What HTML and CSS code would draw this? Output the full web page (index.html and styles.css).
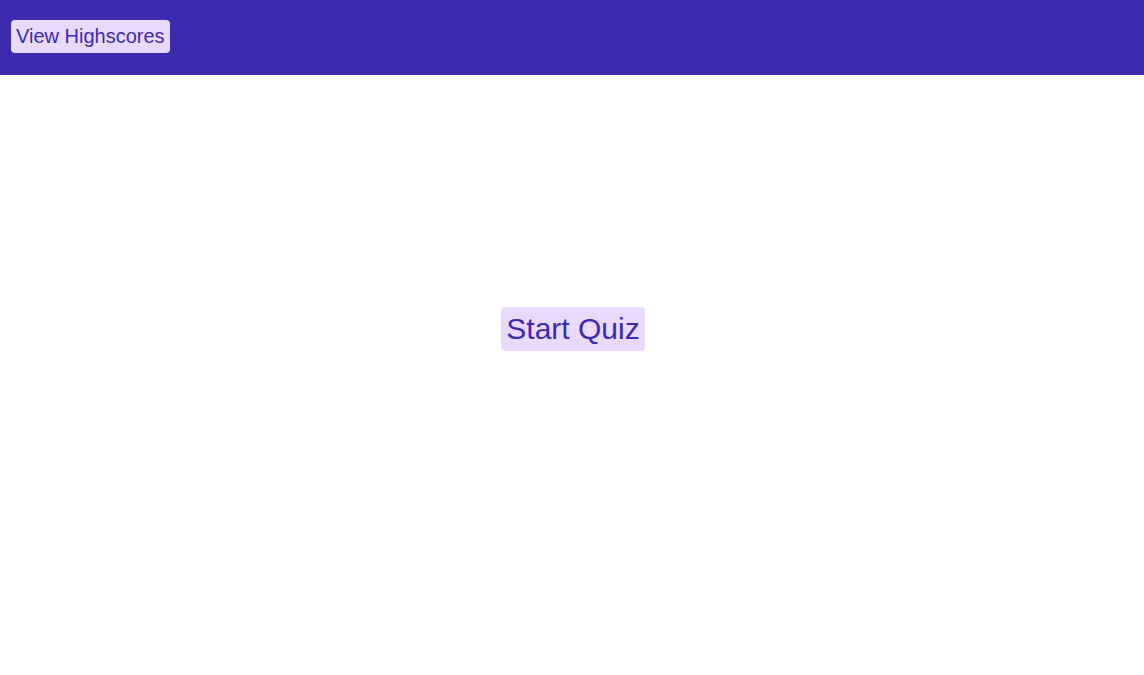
FILE: index.html
```html
<!DOCTYPE html>
<html>
<head>
<meta charset="utf-8">
<link rel="stylesheet" href="styles.css">
</head>
<body>
<header class="top">
  <button class="btn btn-small">View Highscores</button>
</header>
<main class="main">
  <button class="btn btn-large">Start Quiz</button>
</main>
</body>
</html>
```
FILE: styles.css
```css
html, body { margin: 0; padding: 0; }
body { font-family: "Liberation Sans", Arial, sans-serif; background: #fff; }
.top {
  background: #3c2aaf;
  height: 75px;
  display: flex;
  align-items: flex-start;
  padding: 20px 11px 0;
  box-sizing: border-box;
}
.btn {
  font-family: "Liberation Sans", Arial, sans-serif;
  background: #e9dafd;
  color: #3c2aaf;
  border: none;
  border-radius: 4px;
  padding: 5px;
  cursor: pointer;
}
.btn-small { font-size: 20px; line-height: 23px; }
.btn-large { font-size: 30px; line-height: 34px; }
.main {
  display: flex;
  justify-content: center;
  padding-top: 232px;
  padding-left: 2px;
}
```
